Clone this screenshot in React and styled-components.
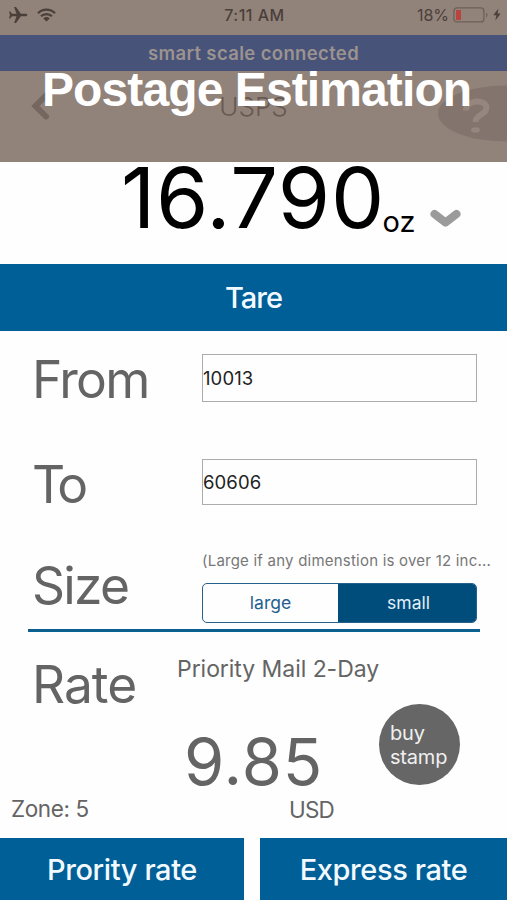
import React, { useState } from 'react'
import styled, { createGlobalStyle, ThemeProvider } from 'styled-components'

const theme = {
    blue: '#005f97',
    deepBlue: '#004c7b',
    banner: '#475378',
    taupe: '#92837a',
    ink: '#4b3f3a',
    grey: '#646464',
    white: '#fefefe',
}

const GlobalStyle = createGlobalStyle`
    * {
        box-sizing: border-box;
    }

    body {
        margin: 0;
        background: #fefefe;
        font-family: Inter, 'Liberation Sans', sans-serif;
    }

    button,
    input {
        margin: 0;
        padding: 0;
        border: 0;
        font-family: inherit;
    }
`

const Screen = styled.div`
    display: flex;
    flex-direction: column;
    width: 507px;
    height: 900px;
    overflow: hidden;
    background: ${({ theme }) => theme.white};
`

const Header = styled.header`
    position: relative;
    height: 161.5px;
    overflow: hidden;
    background: ${({ theme }) => theme.taupe};
`

const StatusBar = styled.div`
    display: grid;
    grid-template-columns: 1fr auto 1fr;
    align-items: center;
    height: 34.5px;
    padding: 0 6px 5px 8px;
    color: ${({ theme }) => theme.ink};
`

const StatusGroup = styled.div`
    display: flex;
    align-items: center;
    justify-content: ${({ $end }) => ($end ? 'flex-end' : 'flex-start')};
    gap: ${({ $end }) => ($end ? '4px' : '9px')};
`

const StatusText = styled.span`
    font-size: 16px;
    font-weight: ${({ $weight }) => $weight || 500};
    line-height: 20px;
    letter-spacing: ${({ $spacing }) => $spacing || '0'};
    white-space: nowrap;
`

const Banner = styled.div`
    height: 36.5px;
    background: ${({ theme }) => theme.banner};
    color: #9c9290;
    font-size: 18.5px;
    font-weight: 600;
    line-height: 37px;
    letter-spacing: 0.35px;
    text-align: center;
`

const NavBar = styled.nav`
    display: grid;
    grid-template-columns: 1fr auto 1fr;
    align-items: start;
    height: 90px;
`

const NavTitle = styled.span`
    padding-top: 19px;
    color: #675952;
    font-size: 26px;
    font-weight: 300;
    line-height: 34px;
`

const BackIcon = styled.svg`
    margin: 20px 0 0 30px;
`

const HelpIcon = styled.svg`
    margin-top: 14px;
    justify-self: end;
`

const Title = styled.h1`
    position: absolute;
    top: 62px;
    left: 42px;
    margin: 0;
    color: #fff;
    font-family: 'Liberation Sans', Arial, sans-serif;
    font-size: 48px;
    font-weight: 700;
    line-height: 56px;
    letter-spacing: -0.9px;
    white-space: nowrap;
`

const Reading = styled.section`
    display: flex;
    align-items: flex-start;
    height: 102px;
    padding-left: 121px;
    color: #000;
`

const Weight = styled.span`
    width: 261.5px;
    font-size: 84.5px;
    line-height: 70px;
    letter-spacing: 0.7px;
    white-space: nowrap;
`

const Unit = styled.span`
    width: 47.5px;
    padding-top: 44px;
    font-size: 29px;
    line-height: 32px;
`

const UnitChevron = styled.svg`
    margin-top: 46px;
`

const TareButton = styled.button`
    height: 67.5px;
    padding-top: 1px;
    background: ${({ theme }) => theme.blue};
    color: #f3faff;
    font-size: 29px;
    font-weight: 500;
    line-height: 66px;
    letter-spacing: -1px;
`

const Form = styled.section`
    height: 297.5px;
    padding: 18px 0 0 32px;
`

const Row = styled.div`
    display: grid;
    grid-template-columns: 170px 275px;
    height: ${({ $height }) => $height}px;
`

const Label = styled.label`
    color: ${({ theme }) => theme.grey};
    font-size: 51.5px;
    font-weight: 400;
    line-height: 60px;
    letter-spacing: ${({ $spacing }) => $spacing || '-1.7px'};
    white-space: nowrap;
`

const ZipInput = styled.input`
    width: 275px;
    height: ${({ $height }) => $height}px;
    margin-top: 5px;
    border: 1.5px solid #acacac;
    border-radius: 0;
    background: transparent;
    color: #222;
    font-size: 18.5px;
    letter-spacing: 0.1px;
    outline: none;
`

const Hint = styled.p`
    margin: 0 0 16px;
    color: #777;
    font-size: 15px;
    line-height: 12px;
    letter-spacing: 0.22px;
    white-space: nowrap;
`

const Segmented = styled.div`
    display: grid;
    grid-template-columns: 1fr 138px;
    height: 39.5px;
    border: 1.5px solid #25618c;
    border-radius: 5px;
    overflow: hidden;
`

const Segment = styled.button`
    padding-left: ${({ $active }) => ($active ? '3px' : '0')};
    background: ${({ $active, theme }) =>
        $active ? theme.deepBlue : 'transparent'};
    color: ${({ $active }) => ($active ? '#e2f0fa' : '#22618e')};
    font-size: 17.5px;
    line-height: 36px;
`

const Divider = styled.hr`
    flex: none;
    width: 452px;
    height: 3px;
    margin: 0 0 0 28px;
    border: 0;
    background: #0c608f;
`

const Rate = styled.section`
    height: 206px;
    padding-top: 22px;
    color: ${({ theme }) => theme.grey};
`

const RateHead = styled.div`
    display: grid;
    grid-template-columns: 145px 1fr;
    height: 50.5px;
    padding-left: 32px;
`

const Service = styled.span`
    font-size: 23px;
    line-height: 30px;
    letter-spacing: -0.05px;
`

const RateBody = styled.div`
    display: grid;
    grid-template-columns: 195px 1fr;
    height: 91px;
    padding-left: 184px;
`

const Amount = styled.span`
    padding-top: 26px;
    font-size: 65px;
    line-height: 64px;
    letter-spacing: 0.9px;
`

const StampButton = styled.button`
    width: 81px;
    height: 81px;
    padding: 2px 0 0 11px;
    border-radius: 50%;
    background: #666;
    color: #f0f0f0;
    font-size: 20px;
    line-height: 23.5px;
    letter-spacing: -0.2px;
    text-align: left;
`

const RateFoot = styled.div`
    display: grid;
    grid-template-columns: 278px 1fr;
    padding-left: 11px;
    font-size: 22.5px;
    line-height: 28px;
    letter-spacing: -0.4px;
`

const Currency = styled.span`
    padding-top: 1px;
    letter-spacing: -0.8px;
`

const Actions = styled.footer`
    display: grid;
    grid-template-columns: 244px 247px;
    gap: 16px;
    height: 62.5px;
`

const ActionButton = styled.button`
    padding-top: 2px;
    background: ${({ theme }) => theme.blue};
    color: #f3faff;
    font-size: 29px;
    font-weight: 500;
    line-height: 60px;
    letter-spacing: -0.4px;
    white-space: nowrap;
`

const AirplaneIcon = () => (
    <svg width="20" height="18" viewBox="0 0 20 18" fill="currentColor">
        <path d="M19.3 9c0-.8-.8-1.3-2-1.3h-4.4L8 .9H6.1l2.4 6.8H4L2.3 5.5H1L2 9l-1 3.5h1.3L4 10.3h4.5l-2.4 6.8H8l4.9-6.8h4.4c1.2 0 2-.5 2-1.3z" />
    </svg>
)

const WifiIcon = () => (
    <svg width="19" height="14" viewBox="0 0 19 14" fill="none">
        <path
            d="M1 5.2a12.1 12.1 0 0 1 17 0M4 8.3a7.8 7.8 0 0 1 11 0"
            stroke="currentColor"
            strokeWidth="2.3"
        />
        <path
            d="M9.5 13.5 6.3 10.4a4.6 4.6 0 0 1 6.4 0z"
            fill="currentColor"
        />
    </svg>
)

const BatteryIcon = () => (
    <svg width="36" height="16" viewBox="0 0 36 16" fill="none">
        <rect
            x="0.9"
            y="0.9"
            width="30"
            height="14"
            rx="3"
            stroke="#6d5f58"
            strokeWidth="1.3"
        />
        <path d="M33.2 5.5c1.7.8 1.7 4.2 0 5z" fill="#6d5f58" />
        <rect x="3" y="3" width="5" height="10" fill="#b9443d" />
    </svg>
)

const BoltIcon = () => (
    <svg width="8" height="13" viewBox="0 0 8 13" fill="currentColor">
        <path d="M5.4.5.3 7.3h3.1L2.3 12.5 7.7 5.4H4.5z" />
    </svg>
)

const App = () => {
    const [size, setSize] = useState('small')
    const [from, setFrom] = useState('10013')
    const [to, setTo] = useState('60606')

    return (
        <ThemeProvider theme={theme}>
            <GlobalStyle />
            <Screen>
                <Header>
                    <StatusBar>
                        <StatusGroup>
                            <AirplaneIcon />
                            <WifiIcon />
                        </StatusGroup>
                        <StatusText $spacing="0.5px">7:11 AM</StatusText>
                        <StatusGroup $end>
                            <StatusText $weight={400}>18%</StatusText>
                            <BatteryIcon />
                            <BoltIcon />
                        </StatusGroup>
                    </StatusBar>
                    <Banner>smart scale connected</Banner>
                    <NavBar>
                        <BackIcon width="20" height="30" viewBox="0 0 20 30">
                            <path
                                d="M16 4.5 5.5 15 16 25.5"
                                fill="none"
                                stroke="#75665f"
                                strokeWidth="6"
                                strokeLinecap="round"
                            />
                        </BackIcon>
                        <NavTitle>USPS</NavTitle>
                        <HelpIcon width="70" height="58" viewBox="0 0 70 58">
                            <ellipse
                                cx="68"
                                cy="28.5"
                                rx="67"
                                ry="28"
                                fill="#83746d"
                            />
                            <path
                                d="M29 25.5c0-11.500 20.500-11.500 20.500-2.500 0 7-11 6-11 14"
                                fill="none"
                                stroke="#95867e"
                                strokeWidth="6"
                            />
                            <ellipse
                                cx="38.5"
                                cy="45"
                                rx="4.5"
                                ry="2.7"
                                fill="#95867e"
                            />
                        </HelpIcon>
                    </NavBar>
                    <Title>Postage Estimation</Title>
                </Header>
                <Reading>
                    <Weight>16.790</Weight>
                    <Unit>oz</Unit>
                    <UnitChevron width="34" height="24" viewBox="0 0 34 24">
                        <path
                            d="M4.5 6 15.5 14.5 26.5 6"
                            fill="none"
                            stroke="#9b9b9b"
                            strokeWidth="8"
                            strokeLinecap="round"
                            strokeLinejoin="round"
                        />
                    </UnitChevron>
                </Reading>
                <TareButton>Tare</TareButton>
                <Form>
                    <Row $height={105}>
                        <Label htmlFor="from">From</Label>
                        <ZipInput
                            id="from"
                            $height={47.5}
                            value={from}
                            onChange={(e) => setFrom(e.target.value)}
                        />
                    </Row>
                    <Row $height={101}>
                        <Label htmlFor="to" $spacing="-4px">
                            To
                        </Label>
                        <ZipInput
                            id="to"
                            $height={46}
                            value={to}
                            onChange={(e) => setTo(e.target.value)}
                        />
                    </Row>
                    <Row $height={73}>
                        <Label as="span">Size</Label>
                        <div>
                            <Hint>(Large if any dimenstion is over 12 inc...</Hint>
                            <Segmented>
                                {['large', 'small'].map((name) => (
                                    <Segment
                                        key={name}
                                        $active={size === name}
                                        onClick={() => setSize(name)}
                                    >
                                        {name}
                                    </Segment>
                                ))}
                            </Segmented>
                        </div>
                    </Row>
                </Form>
                <Divider />
                <Rate>
                    <RateHead>
                        <Label as="span" $spacing="-1px">
                            Rate
                        </Label>
                        <Service>Priority Mail 2-Day</Service>
                    </RateHead>
                    <RateBody>
                        <Amount>9.85</Amount>
                        <StampButton>
                            buy
                            <br />
                            stamp
                        </StampButton>
                    </RateBody>
                    <RateFoot>
                        <span>Zone: 5</span>
                        <Currency>USD</Currency>
                    </RateFoot>
                </Rate>
                <Actions>
                    <ActionButton>Prority rate</ActionButton>
                    <ActionButton>Express rate</ActionButton>
                </Actions>
            </Screen>
        </ThemeProvider>
    )
}

export default App
